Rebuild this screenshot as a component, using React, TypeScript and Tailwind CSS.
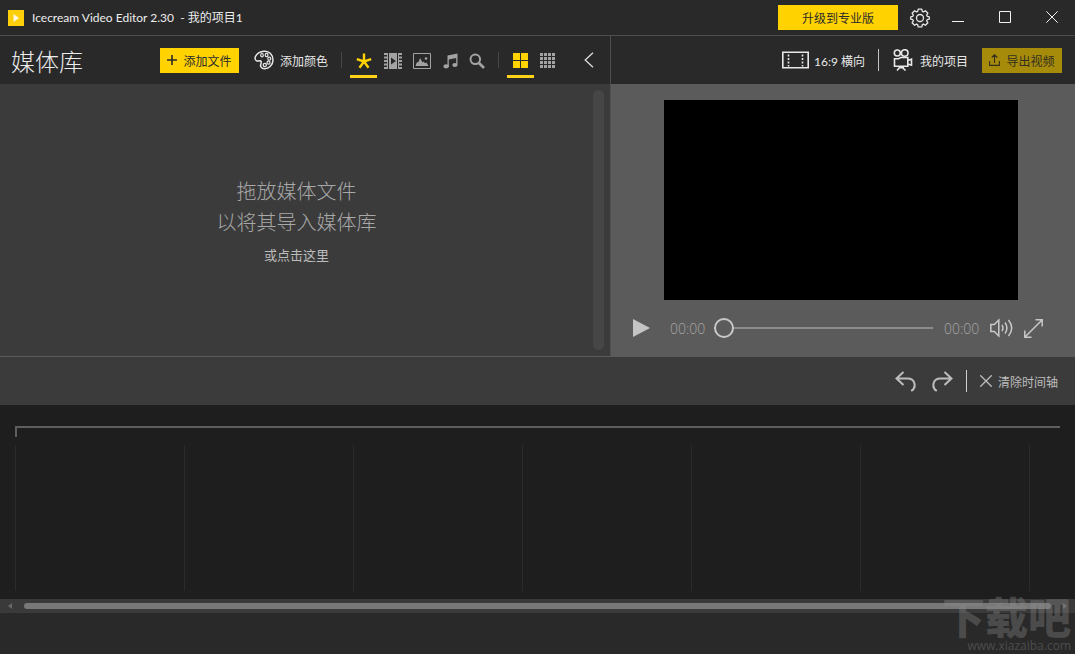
import { ReactNode, useState } from 'react'

interface TabProps {
  label: string
  active: boolean
  onClick: () => void
  children: ReactNode
}

function Tab({ label, active, onClick, children }: TabProps) {
  return (
    <button
      type="button"
      aria-label={label}
      aria-pressed={active}
      onClick={onClick}
      className={
        'flex h-9 w-[27px] items-center justify-center border-b-3 pt-1 ' +
        (active ? 'border-[#ffd21a] text-[#ffd200]' : 'border-transparent text-[#a3a3a3]')
      }
    >
      {children}
    </button>
  )
}

// the CJK face sits high in its line box, so labels next to icons get some top padding
function Label({ children }: { children: ReactNode }) {
  return <span className="pt-[3px]">{children}</span>
}

function Divider({ className }: { className: string }) {
  return <span className={'w-px shrink-0 ' + className} />
}

function TitleBar() {
  return (
    <header className="flex h-9 items-center border-b border-[#4d4d4d] pl-2">
      <svg width="16" height="16" viewBox="0 0 16 16">
        <rect width="16" height="16" fill="#ffcf0a" />
        <path d="M5.5 4v8L11 8z" fill="#fffbe0" />
      </svg>
      <h1 className="ml-2 text-xs whitespace-pre text-[#ededed]">Icecream Video Editor 2.30  - 我的项目1</h1>
      <button type="button" className="ml-auto flex h-[25px] w-[120px] items-center justify-center bg-[#ffd200] text-xs text-[#2b2b2b]">
        <Label>升级到专业版</Label>
      </button>
      <button type="button" aria-label="设置" className="ml-3 text-[#e6e6e6]">
        <svg width="20" height="20" viewBox="0 0 20 20" fill="none" stroke="currentColor" strokeWidth="1.3" strokeLinejoin="round">
          <path d="M8.200 1.200h3.600l.5 2.200 1.100.5 2-1.200 2.500 2.500-1.200 2 .5 1.100 2.100.5v2.400l-2.100.5-.5 1.100 1.200 2-2.500 2.500-2-1.200-1.100.5-.5 2.200H8.200l-.5-2.200-1.100-.5-2 1.200-2.500-2.500 1.200-2-.5-1.100-2.100-.5V8.800l2.100-.5.5-1.100-1.200-2 2.500-2.500 2 1.200 1.100-.5z" />
          <circle cx="10" cy="10" r="3.5" />
        </svg>
      </button>
      <div className="ml-1 flex h-full items-center pb-[2px] text-[#f2f2f2]">
        <button type="button" aria-label="最小化" className="flex h-full w-[47px] items-center justify-center">
          <svg width="12" height="12" viewBox="0 0 12 12" stroke="currentColor">
            <path d="M0 10.5h12" />
          </svg>
        </button>
        <button type="button" aria-label="最大化" className="flex h-full w-[47px] items-center justify-center">
          <svg width="12" height="12" viewBox="0 0 12 12" fill="none" stroke="currentColor">
            <path d="M.5.5h11v11H.5z" />
          </svg>
        </button>
        <button type="button" aria-label="关闭" className="flex h-full w-[47px] items-center justify-center">
          <svg width="12" height="12" viewBox="0 0 12 12" stroke="currentColor">
            <path d="M.3.3l11.4 11.4M11.7.3L.3 11.7" />
          </svg>
        </button>
      </div>
    </header>
  )
}

function LibraryHeader() {
  const [filter, setFilter] = useState('all')
  const [view, setView] = useState('large')

  return (
    <div className="flex h-12 items-center border-r border-[#4d4d4d] bg-[#292929] pl-[11px] pr-[13px]">
      <h2 className="flex text-2xl font-light whitespace-nowrap text-[#ececec]">
        <Label>媒体库</Label>
      </h2>
      <div className="ml-auto flex items-center">
        <button type="button" className="flex h-[25px] w-[79px] items-center justify-center gap-[6px] bg-[#ffd200] text-xs whitespace-nowrap text-[#2b2b2b]">
          <svg width="10" height="10" viewBox="0 0 10 10" stroke="currentColor" strokeWidth="1.6">
            <path d="M5 0v10M0 5h10" />
          </svg>
          <Label>添加文件</Label>
        </button>
        <button type="button" className="ml-[15px] flex items-center gap-[6px] text-xs whitespace-nowrap text-[#e8e8e8]">
          <svg width="20" height="20" viewBox="0 0 20 20" fill="none" stroke="currentColor" strokeWidth="1.5">
            <path d="M10 1.200C15.200.7 19.100 4.800 19 10c-.1 5-4 8.800-8.600 8.700-3 0-4.600-2.600-3.500-4.800.8-1.700.4-3.200-1.100-3.200-1.300 0-2 .8-3.200.2C.9 10 .6 7.700 1.800 5.900 3.400 3.200 6.600 1.500 10 1.200z" />
            <ellipse cx="8" cy="5.2" rx="1.3" ry="1.7" strokeWidth="1.2" />
            <ellipse cx="12.6" cy="5" rx="1.4" ry="1.7" strokeWidth="1.2" />
            <circle cx="15.3" cy="8.7" r="1.5" strokeWidth="1.2" />
            <circle cx="14.5" cy="12.7" r="1.5" strokeWidth="1.2" />
            <circle cx="10.8" cy="15" r="1.6" strokeWidth="1.2" />
          </svg>
          <Label>添加颜色</Label>
        </button>
        <Divider className="mr-2 ml-[13px] h-4 bg-[#484848]" />
        <div className="flex gap-[2px]">
          <Tab label="全部" active={filter === 'all'} onClick={() => setFilter('all')}>
            <svg width="16" height="16" viewBox="0 0 16 16" stroke="currentColor" strokeWidth="2.4">
              <path d="M8 8.500V.5M8 8.500L.8 6.200M8 8.500l7.200-2.300M8 8.500l-4.500 6.300M8 8.500l4.500 6.300" />
            </svg>
          </Tab>
          <Tab label="视频" active={filter === 'video'} onClick={() => setFilter('video')}>
            <svg width="18" height="16" viewBox="0 0 18 16" fill="currentColor">
              <path fillRule="evenodd" d="M5 0h8v16H5zM7 4.500v7L12 8z" />
              <path d="M0 0h4v2H0zM0 3.500h4v2H0zM0 7h4v2H0zM0 10.500h4v2H0zM0 14h4v2H0zM14 0h4v2h-4zM14 3.500h4v2h-4zM14 7h4v2h-4zM14 10.500h4v2h-4zM14 14h4v2h-4z" />
              <path d="M3 0h1v16H3zM14 0h1v16h-1z" />
            </svg>
          </Tab>
          <Tab label="图片" active={filter === 'image'} onClick={() => setFilter('image')}>
            <svg width="18" height="16" viewBox="0 0 18 16" fill="currentColor">
              <path d="M.5.5h17v15H.5z" fill="none" stroke="currentColor" />
              <path d="M2.500 13l1.500-4 1.200.5L7.200 5l2.300 4.500 1.200-1 1.300 1.800 1.500-.8 2 3.500z" />
              <circle cx="13" cy="5.5" r="1.3" />
            </svg>
          </Tab>
          <Tab label="音乐" active={filter === 'music'} onClick={() => setFilter('music')}>
            <svg width="15" height="16" viewBox="0 0 15 16" fill="currentColor">
              <path d="M4.500 2.500L14.500.5v11.300h-1.300V5L5.800 6.400v7.300H4.500z" />
              <ellipse cx="3.2" cy="13.3" rx="2.7" ry="2.1" />
              <ellipse cx="11.9" cy="12" rx="2.6" ry="2.1" />
            </svg>
          </Tab>
          <button type="button" aria-label="搜索" className="flex w-[22px] items-center justify-center pt-1 pb-[3px] text-[#a3a3a3]">
            <svg width="16" height="16" viewBox="0 0 16 16" fill="none" stroke="currentColor">
              <circle cx="6.3" cy="6.3" r="4.8" strokeWidth="2" />
              <path d="M10 10l5 5" strokeWidth="2.6" />
            </svg>
          </button>
        </div>
        <Divider className="mr-2 ml-[10px] h-4 bg-[#484848]" />
        <div className="flex">
          <Tab label="大图标" active={view === 'large'} onClick={() => setView('large')}>
            <svg width="15" height="15" viewBox="0 0 15 15" fill="currentColor">
              <path d="M0 0h7v7H0zM8 0h7v7H8zM0 8h7v7H0zM8 8h7v7H8z" />
            </svg>
          </Tab>
          <Tab label="小图标" active={view === 'small'} onClick={() => setView('small')}>
            <svg width="15" height="15" viewBox="0 0 15 15" fill="currentColor">
              {[0, 4, 8, 12].map((y) => [0, 4, 8, 12].map((x) => <rect key={x + '-' + y} x={x} y={y} width="3" height="3" />))}
            </svg>
          </Tab>
        </div>
        <button type="button" aria-label="折叠" className="ml-5 flex w-4 justify-center text-[#dedede]">
          <svg width="10" height="16" viewBox="0 0 10 16" fill="none" stroke="currentColor" strokeWidth="1.3">
            <path d="M9 .8L1.200 8 9 15.200" />
          </svg>
        </button>
      </div>
    </div>
  )
}

function ProjectHeader() {
  return (
    <div className="flex h-12 items-center justify-end bg-[#292929] pr-[13px] text-xs whitespace-nowrap text-[#e8e8e8]">
      <button type="button" className="flex items-center gap-[5px]">
        <svg width="27" height="18" viewBox="0 0 27 18" fill="none" stroke="currentColor" strokeWidth="1.6">
          <path d="M.8 1.300h25.400v15.400H.8z" />
          <path d="M6.500 3.500v12M20.500 3.500v12" strokeDasharray="2 1.5" />
        </svg>
        <Label>16:9 横向</Label>
      </button>
      <Divider className="mr-[14px] ml-[13px] h-[22px] bg-[#c4c4c4]" />
      <button type="button" className="flex items-center gap-[7px]">
        <svg width="20" height="22" viewBox="0 0 20 22" fill="none" stroke="currentColor" strokeWidth="1.6">
          <circle cx="4.3" cy="4" r="3" />
          <circle cx="11.7" cy="4" r="3.3" />
          <path d="M1.500 9.800v7.400h13.300V8.500H7.500L5.500 9.800zM14.800 11.500l3.700-1.300v6l-3.700-1.300M7.500 17.500L4 21.500M8.500 17.500l4 4M5.500 18.800h5.500" />
        </svg>
        <Label>我的项目</Label>
      </button>
      <button type="button" className="ml-[14px] flex h-[25px] w-20 items-center justify-center gap-[6px] bg-[#a68b0b] text-[#33301f]">
        <svg width="11" height="12" viewBox="0 0 11 12" fill="none" stroke="currentColor" strokeWidth="1.1">
          <path d="M.6 7v4.400h9.800V7M5.500 9V1M2.700 3.500L5.500.8l2.800 2.700" />
        </svg>
        <Label>导出视频</Label>
      </button>
    </div>
  )
}

function MediaLibrary() {
  return (
    <section className="flex border-r border-[#4f4f4f] bg-[#3b3b3b] pr-[6px]">
      <button type="button" className="flex flex-1 flex-col items-center justify-center pt-[7px] text-[#a8a8a8]">
        <span className="text-xl leading-[31px] font-light">拖放媒体文件</span>
        <span className="text-xl leading-[31px] font-light">以将其导入媒体库</span>
        <span className="text-[13px] leading-[34px] text-[#bcbcbc]">或点击这里</span>
      </button>
      <div className="my-[6px] w-[11px] rounded-full bg-[#464646]" />
    </section>
  )
}

function Preview() {
  return (
    <section className="bg-[#5b5b5b] pt-4">
      <div className="pr-[57px] pl-[53px]">
        <div className="aspect-[354/200] bg-black" />
      </div>
      <div className="flex h-14 items-center pr-8 pl-[22px] font-['Open_Sans',sans-serif] text-sm font-light text-[#a6a6a6]">
        <button type="button" aria-label="播放">
          <svg width="17" height="18" viewBox="0 0 17 18" fill="#c4c4c4">
            <path d="M0 0v18l17-9z" />
          </svg>
        </button>
        <span className="ml-5 w-9 pt-[2px]">00:00</span>
        <input
          type="range"
          aria-label="播放进度"
          defaultValue={0}
          className="mr-[11px] ml-2 h-5 min-w-0 flex-1 appearance-none bg-transparent [&::-webkit-slider-runnable-track]:h-[2px] [&::-webkit-slider-runnable-track]:bg-[#8c8c8c] [&::-webkit-slider-thumb]:-mt-[9px] [&::-webkit-slider-thumb]:size-5 [&::-webkit-slider-thumb]:appearance-none [&::-webkit-slider-thumb]:rounded-full [&::-webkit-slider-thumb]:border-2 [&::-webkit-slider-thumb]:border-[#c8c8c8] [&::-webkit-slider-thumb]:bg-[#5b5b5b]"
        />
        <span className="w-9 pt-[2px]">00:00</span>
        <button type="button" aria-label="音量" className="ml-[10px] text-[#c8c8c8]">
          <svg width="23" height="20" viewBox="0 0 23 20" fill="none" stroke="currentColor" strokeWidth="1.5">
            <path d="M.8 6.500v7h3.500l4.500 4.500V2L4.300 6.500zM12 7c1.200 2 1.200 4 0 6M15 4.500c2.400 3.500 2.400 7.500 0 11M18.500 2c4 5 4 11 0 16" />
          </svg>
        </button>
        <button type="button" aria-label="全屏" className="ml-[11px] text-[#c8c8c8]">
          <svg width="19" height="19" viewBox="0 0 19 19" fill="none" stroke="currentColor" strokeWidth="1.5">
            <path d="M1 18L18 1M11.500.8h6.700v6.700M.8 11.500v6.700h6.700" />
          </svg>
        </button>
      </div>
    </section>
  )
}

function TimelineToolbar() {
  return (
    <div className="flex h-[49px] items-center justify-end border-t border-[#5a5a5a] bg-[#3b3b3b] pr-[17px] text-[#bdbdbd]">
      <button type="button" aria-label="撤销">
        <svg width="21" height="21" viewBox="0 0 21 21" fill="none" stroke="currentColor" strokeWidth="2">
          <path d="M8.500 1L1.500 7.500l7 6.500M1.500 7.500h11c8 0 9.300 9 3.700 12.500" />
        </svg>
      </button>
      <button type="button" aria-label="重做" className="ml-4">
        <svg width="21" height="21" viewBox="0 0 21 21" fill="none" stroke="currentColor" strokeWidth="2">
          <path d="M12.500 1l7 6.500-7 6.500M19.500 7.500h-11C.5 7.500-.8 16.500 4.800 20" />
        </svg>
      </button>
      <Divider className="ml-[13px] h-[22px] bg-[#d0d0d0]" />
      <button type="button" className="ml-[13px] flex items-center gap-[6px] text-xs">
        <svg width="12" height="12" viewBox="0 0 12 12" stroke="currentColor" strokeWidth="1.3">
          <path d="M.3.3l11.4 11.4M11.7.3L.3 11.7" />
        </svg>
        <Label>清除时间轴</Label>
      </button>
    </div>
  )
}

function Timeline() {
  return (
    <section className="flex flex-1 flex-col bg-[#1e1e1e] pt-[21px] pl-[15px]">
      <div className="mr-[15px] h-[11px] border-t-2 border-l-2 border-[#5e5e5e]" />
      <div className="mt-2 mb-2 flex min-h-[146px] flex-1 overflow-hidden">
        {Array.from({ length: 7 }, (_, i) => (
          <div key={i} className="w-[169px] shrink-0 border-l border-[#2b2b2b]" />
        ))}
      </div>
    </section>
  )
}

export default function App() {
  return (
    <div className="relative flex min-h-screen flex-col overflow-hidden bg-[#292929] font-[Lato,'Noto_Sans_CJK_SC',sans-serif]">
      <TitleBar />
      <main className="flex flex-1 flex-col">
        <div className="grid grid-cols-[611fr_464fr]">
          <LibraryHeader />
          <ProjectHeader />
          <MediaLibrary />
          <Preview />
        </div>
        <TimelineToolbar />
        <Timeline />
        <div className="flex h-[14px] items-center bg-[#3a3a3a] px-2">
          <svg width="4" height="6" viewBox="0 0 4 6" fill="#686868">
            <path d="M4 0v6L0 3z" />
          </svg>
          <div className="mx-3 h-[6px] flex-1 rounded-full bg-[#787878]" />
          <svg width="4" height="6" viewBox="0 0 4 6" fill="#686868">
            <path d="M0 0v6l4-3z" />
          </svg>
        </div>
      </main>
      <footer className="h-[41px]" />
      <div className="pointer-events-none absolute right-1 bottom-0 flex flex-col items-end text-[#8c8c8c] opacity-35">
        <span className="text-[43px] leading-10 font-black">下载吧</span>
        <span className="font-['Open_Sans',sans-serif] text-xs leading-4">www.xiazaiba.com</span>
      </div>
    </div>
  )
}
